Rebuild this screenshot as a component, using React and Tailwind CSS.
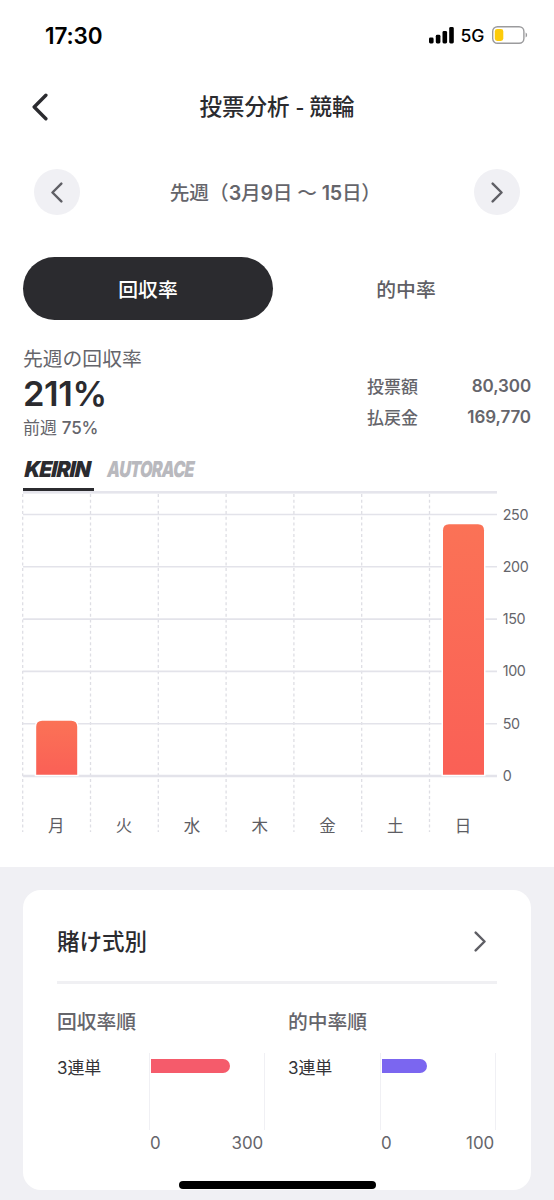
const days = ['月', '火', '水', '木', '金', '土', '日'];
const ticks = [250, 200, 150, 100, 50, 0];
const dailyRates = [52, 0, 0, 0, 0, 0, 240];

const COL = 67.8;
const ZERO_Y = 285;
const UNIT = 1.046;

const Chevron = ({ left, className, strokeWidth }) => (
    <svg viewBox="0 0 16 26" fill="none" stroke="currentColor" strokeWidth={strokeWidth} strokeLinecap="round" strokeLinejoin="round" className={className}>
        <path d={left ? 'M14 2 3 13l11 11' : 'm2 2 11 11L2 24'} />
    </svg>
);

const StatusBar = () => (
    <div className="flex h-[72px] items-center justify-between pl-[45px] pr-[26px] text-black">
        <span className="text-[22.5px] font-semibold tracking-[-0.1px]">17:30</span>
        <div className="flex items-center">
            <svg className="-mt-px" width="25" height="17" viewBox="0 0 25 17" fill="currentColor">
                <rect x="0" y="10.5" width="4.6" height="6" rx="1.4" />
                <rect x="6.8" y="7.8" width="4.6" height="8.7" rx="1.4" />
                <rect x="13.5" y="4" width="4.6" height="12.5" rx="1.4" />
                <rect x="20.2" y="0" width="4.6" height="16.5" rx="1.4" />
            </svg>
            <span className="ml-[7px] text-[17.6px] font-medium tracking-[-0.3px]">5G</span>
            <svg className="-mt-[2px] ml-[8px]" width="36" height="18" viewBox="0 0 36 18">
                <rect x="0.7" y="0.7" width="31.2" height="16.6" rx="4.8" fill="none" stroke="#9b9b9d" strokeWidth="1.4" />
                <rect x="2.8" y="3" width="8.5" height="12" rx="2.4" fill="#fdcb0a" />
                <path d="M33.6 6.6c2 .9 2 4 0 4.9z" fill="#9b9b9d" />
            </svg>
        </div>
    </div>
);

const DailyChart = () => (
    <svg width="531" height="345" viewBox="0 0 531 345" className="block">
        <defs>
            <linearGradient id="bar" x1="0" y1="0" x2="0" y2="1">
                <stop offset="0" stopColor="#fb7256" />
                <stop offset="1" stopColor="#fa6056" />
            </linearGradient>
        </defs>
        {days.map((day, i) => (
            <line key={day} x1={22.7 + i * COL} x2={22.7 + i * COL} y1="3" y2="341" stroke="#dedee4" strokeWidth="1.3" strokeDasharray="3 2.7" />
        ))}
        {ticks.map((t) => (
            <g key={t}>
                <line x1="23" x2="497" y1={ZERO_Y - t * UNIT} y2={ZERO_Y - t * UNIT} stroke="#e3e3ea" strokeWidth={t ? 1.6 : 2.6} />
                <text x="502.7" y={ZERO_Y - t * UNIT + 5} fontSize="14.3" letterSpacing="-0.35" fill="#65656b">{t}</text>
            </g>
        ))}
        <rect x="23" y="0" width="474" height="2.6" fill="#e5e5ec" />
        {dailyRates.map((rate, i) => {
            if (!rate) return null;
            const x = 36.2 + i * COL;
            const top = ZERO_Y - 0.8 - rate * UNIT;
            const d = `M${x} 283.8V${top + 6}q0-6 6-6h29q6 0 6 6V283.8z`;
            return (
                <g key={i}>
                    <path d={d} fill="none" stroke="#fff" strokeWidth="3" />
                    <path d={d} fill="url(#bar)" />
                </g>
            );
        })}
        {days.map((day, i) => (
            <text key={day} x={56.3 + i * COL} y="340.5" textAnchor="middle" fontSize="16.5" fill="#5d5d63">{day}</text>
        ))}
    </svg>
);

const RankChart = ({ title, name, max, barClass }) => (
    <div className="w-[208px]">
        <h3 className="flex h-[30px] items-center pt-[2px] text-[19.8px] font-medium text-[#65656b]">{title}</h3>
        <div className="mt-4 flex">
            <div className="flex h-[28px] w-[92px] items-center pt-[2px] text-[17px] tracking-[-0.1px] text-[#333337]">{name}</div>
            <div className="w-[116px]">
                <div className="h-[77px] border-x-[1.5px] border-[#f0f0f4] pt-[6px] pl-px">
                    <div className={barClass} />
                </div>
                <div className="flex h-[26px] items-center justify-between pl-px pr-[2px] text-[16.9px] tracking-[-0.1px] text-[#65656b]">
                    <span>0</span>
                    <span>{max}</span>
                </div>
            </div>
        </div>
    </div>
);

const App = () => {
    return (
        <div className="relative h-[1200px] w-[554px] overflow-hidden bg-white font-['Inter','Noto_Sans_CJK_JP',sans-serif] leading-none text-[#2b2b2f]">
            <StatusBar />

            <header className="grid h-[70px] grid-cols-[100px_1fr_100px] items-center">
                <Chevron left strokeWidth={3.2} className="ml-[31px] h-[28px] w-[17px]" />
                <h1 className="pt-px text-center text-[22.5px] font-medium whitespace-nowrap">
                    投票分析 <span className="inline-block w-[8px] text-[19px] font-semibold">-</span> 競輪
                </h1>
            </header>

            <div className="flex h-[100px] items-center justify-between px-[34px]">
                <button className="flex size-[46px] items-center justify-center rounded-full bg-[#f0f0f4] pr-px text-[#5f5f65]">
                    <Chevron left strokeWidth={3} className="h-[21px] w-[13px]" />
                </button>
                <span className="pt-[4px] pr-[7px] text-[19.7px] font-medium whitespace-nowrap text-[#65656b]">
                    先週（<span className="tracking-[-0.25px]"><b className="font-semibold">3</b>月<b className="font-semibold">9</b>日 〜 <b className="font-semibold">15</b>日</span>
                    <span className="inline-block w-[16px]">）</span>
                </span>
                <button className="flex size-[46px] items-center justify-center rounded-full bg-[#f0f0f4] text-[#5f5f65]">
                    <Chevron strokeWidth={3} className="h-[21px] w-[13px]" />
                </button>
            </div>

            <div className="mx-[23px] mt-[15px] grid h-[63px] grid-cols-2 gap-2 text-[19.8px] font-medium">
                <button className="rounded-full bg-[#2b2b2f] pt-[4px] text-white">回収率</button>
                <button className="pt-[4px] text-[#5f5f65]">的中率</button>
            </div>

            <div className="mx-[23px] mt-[24px] flex h-[100px] justify-between text-[#65656b]">
                <div>
                    <div className="flex h-[28px] items-center pt-[3px] text-[19.8px]">先週の回収率</div>
                    <div className="flex h-[44px] items-center text-[34.5px] font-semibold tracking-[-0.4px] text-[#2b2b2f]">211%</div>
                    <div className="flex h-[22px] items-center pt-[2px] text-[17px]">
                        前週&nbsp;<span className="font-medium tracking-[-0.2px]">75%</span>
                    </div>
                </div>
                <div className="w-[164px] pt-[26px] text-[17px] font-medium">
                    <div className="flex h-[32px] items-center justify-between">
                        <span className="pt-[2px]">投票額</span>
                        <span className="font-semibold tracking-[-0.1px]">80,300</span>
                    </div>
                    <div className="flex h-[31px] items-center justify-between">
                        <span className="pt-[2px]">払戻金</span>
                        <span className="font-semibold tracking-[-0.1px]">169,770</span>
                    </div>
                </div>
            </div>

            <div className="relative z-10 ml-[23px] flex h-[47px] gap-[13px] pt-[8px] text-[22px] font-black italic">
                <div className="h-[39px] w-[71px] border-b-[3px] border-[#2b2b2f] pt-[6px] pl-px">
                    <span className="inline-block origin-bottom-left scale-x-[0.95] -skew-x-3 tracking-[-1px]">KEIRIN</span>
                </div>
                <div className="h-[39px] pt-[6px] text-[#b9b9be]">
                    <span className="inline-block origin-bottom-left scale-x-[0.735] -skew-x-3 tracking-[-1px]">AUTORACE</span>
                </div>
            </div>

            <DailyChart />

            <section className="mt-[31px] h-[333px] bg-[#f0f0f4] px-[23px] pt-[23px]">
                <div className="h-[300px] rounded-[18px] bg-white px-[34px]">
                    <div className="flex h-[94px] items-center justify-between border-b-[3px] border-[#f0f0f3] pt-[11px] pr-[10px]">
                        <h2 className="pt-[2px] text-[22.5px] font-medium">賭け式別</h2>
                        <Chevron strokeWidth={3} className="h-[21px] w-[13px] text-[#5f5f65]" />
                    </div>
                    <div className="mt-[23px] flex gap-[23px]">
                        <RankChart title="回収率順" name="3連単" max={300} barClass="h-[14px] w-[79px] rounded-r-full bg-[#f55b6b]" />
                        <RankChart title="的中率順" name="3連単" max={100} barClass="h-[14px] w-[45px] rounded-r-full bg-[#7b66f0]" />
                    </div>
                </div>
            </section>

            {/* home indicator */}
            <div className="absolute bottom-[11px] left-[179px] h-[8px] w-[197px] rounded-full bg-black" />
        </div>
    );
};

export default App;
